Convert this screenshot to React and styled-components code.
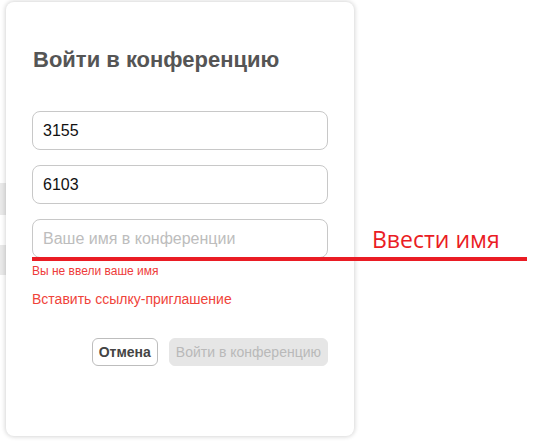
import React from "react";
import styled, { createGlobalStyle } from "styled-components";

const GlobalStyle = createGlobalStyle`
  html, body {
    margin: 0;
    padding: 0;
    background: #fff;
    font-family: "Liberation Sans", Arial, sans-serif;
  }
`;

const Page = styled.div`
  position: relative;
  width: 546px;
  height: 442px;
  overflow: hidden;
  background: #fff;
`;

const Backdrop = styled.div`
  position: absolute;
  left: 0;
  top: 183px;
  width: 8px;
  height: ${({ h }) => h}px;
  margin-top: ${({ offset }) => offset}px;
  background: #e9e9e9;
`;

const Card = styled.div`
  position: absolute;
  left: 6px;
  top: 2px;
  width: 348px;
  height: 434px;
  box-sizing: border-box;
  background: #fff;
  border-radius: 8px;
  box-shadow: 0 0 4px 1px rgba(0, 0, 0, 0.16);
  padding: 45px 26px 0 26px;
  display: flex;
  flex-direction: column;
`;

const Title = styled.h2`
  margin: 0 0 0 1px;
  font-size: 22px;
  line-height: 26px;
  font-weight: bold;
  color: #555;
`;

const Fields = styled.div`
  display: flex;
  flex-direction: column;
  gap: 15px;
  margin-top: 38px;
`;

const Input = styled.input`
  box-sizing: border-box;
  width: 296px;
  height: 39px;
  border: 1px solid #c8c8c8;
  border-radius: 8px;
  padding: 0 10px;
  font-family: "Liberation Sans", Arial, sans-serif;
  font-size: 16px;
  color: #111;
  outline: none;
  background: #fff;

  &::placeholder {
    color: #bdbdbd;
  }
`;

const ErrorText = styled.div`
  margin-top: 6px;
  font-size: 12px;
  line-height: 14px;
  color: #ee3b3b;
`;

const InviteLink = styled.a`
  margin-top: 13px;
  font-size: 14px;
  line-height: 16px;
  color: #f0433a;
  text-decoration: none;
  cursor: pointer;
`;

const Actions = styled.div`
  display: flex;
  justify-content: flex-end;
  gap: 11px;
  margin-top: 31px;
`;

const Button = styled.button`
  box-sizing: border-box;
  height: 28px;
  padding: 0 6px;
  border-radius: 6px;
  font-family: "Liberation Sans", Arial, sans-serif;
  font-size: 14px;
  border: 1px solid ${({ primary }) => (primary ? "#e6e6e6" : "#bdbdbd")};
  background: ${({ primary }) => (primary ? "#e6e6e6" : "#fff")};
  color: ${({ primary }) => (primary ? "#b9b9b9" : "#444")};
  font-weight: ${({ primary }) => (primary ? "normal" : "bold")};
`;

const Annotation = styled.div`
  position: absolute;
  left: 32px;
  top: 225px;
  width: 495px;
`;

const AnnotationText = styled.div`
  margin-left: 340px;
  font-family: "Open Sans", "Noto Sans", sans-serif;
  font-size: 23px;
  line-height: 29px;
  color: #ea1c24;
`;

const AnnotationLine = styled.div`
  height: 4px;
  margin-top: 3px;
  background: #ea1c24;
`;

export default function App() {
  return (
    <Page>
      <GlobalStyle />
      <Backdrop h={32} offset={0} />
      <Backdrop h={30} offset={62} />
      <Card>
        <Title>Войти в конференцию</Title>
        <Fields>
          <Input defaultValue="3155" />
          <Input defaultValue="6103" />
          <Input placeholder="Ваше имя в конференции" />
        </Fields>
        <ErrorText>Вы не ввели ваше имя</ErrorText>
        <InviteLink>Вставить ссылку-приглашение</InviteLink>
        <Actions>
          <Button>Отмена</Button>
          <Button primary disabled>
            Войти в конференцию
          </Button>
        </Actions>
      </Card>
      <Annotation>
        <AnnotationText>Ввести имя</AnnotationText>
        <AnnotationLine />
      </Annotation>
    </Page>
  );
}
